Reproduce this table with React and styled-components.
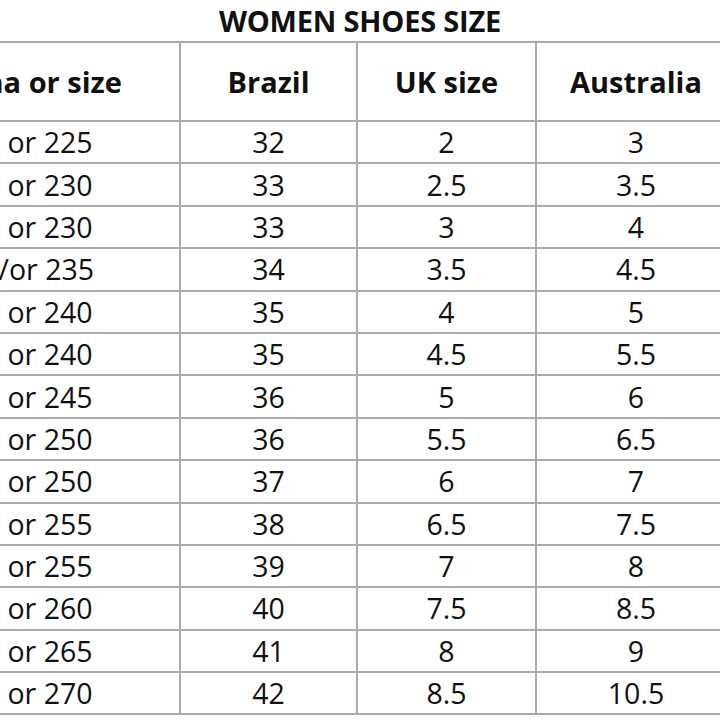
import React from 'react';
import styled, { createGlobalStyle } from 'styled-components';

const GlobalStyle = createGlobalStyle`
  html, body {
    margin: 0;
    padding: 0;
    background: #ffffff;
    overflow: hidden;
  }
  body {
    font-family: "Open Sans", "Liberation Sans", sans-serif;
    color: #111111;
  }
`;

const Page = styled.div`
  width: 720px;
  height: 720px;
  overflow: hidden;
  background: #fff;
`;

const Title = styled.h1`
  margin: 0;
  height: 41px;
  line-height: 42px;
  text-align: center;
  font-size: 29px;
  font-weight: 700;
  letter-spacing: -0.2px;
  color: #111;
`;

const Table = styled.table`
  margin-left: -117px;
  border-collapse: collapse;
  table-layout: fixed;
  width: 852px;
`;

const HeadCell = styled.th`
  height: 77px;
  padding: 0 ${(p) => (p.$lead ? '4px' : '0')} 0 0;
  border: 2px solid #ababab;
  font-size: 29px;
  font-weight: 700;
  text-align: center;
  white-space: nowrap;
  color: #111;
`;

const Cell = styled.td`
  height: 40.4px;
  padding: 0 ${(p) => (p.$lead ? '4px' : '0')} 0 0;
  border: 2px solid #ababab;
  font-size: 28.5px;
  font-weight: 400;
  text-align: center;
  white-space: nowrap;
  color: #111;
`;

const columns = [
  { label: 'China or size', width: 296 },
  { label: 'Brazil', width: 177 },
  { label: 'UK size', width: 179 },
  { label: 'Australia', width: 200 },
];

const rows = [
  ['34 or 225', '32', '2', '3'],
  ['35 or 230', '33', '2.5', '3.5'],
  ['35 or 230', '33', '3', '4'],
  ['36/or 235', '34', '3.5', '4.5'],
  ['36 or 240', '35', '4', '5'],
  ['37 or 240', '35', '4.5', '5.5'],
  ['38 or 245', '36', '5', '6'],
  ['38 or 250', '36', '5.5', '6.5'],
  ['39 or 250', '37', '6', '7'],
  ['39 or 255', '38', '6.5', '7.5'],
  ['40 or 255', '39', '7', '8'],
  ['41 or 260', '40', '7.5', '8.5'],
  ['42 or 265', '41', '8', '9'],
  ['43 or 270', '42', '8.5', '10.5'],
];

export default function App() {
  return (
    <Page>
      <GlobalStyle />
      <Title>WOMEN SHOES SIZE</Title>
      <Table>
        <colgroup>
          {columns.map((c) => (
            <col key={c.label} style={{ width: c.width }} />
          ))}
        </colgroup>
        <thead>
          <tr>
            {columns.map((c, j) => (
              <HeadCell key={c.label} $lead={j === 0}>
                {c.label}
              </HeadCell>
            ))}
          </tr>
        </thead>
        <tbody>
          {rows.map((r, i) => (
            <tr key={i}>
              {r.map((v, j) => (
                <Cell key={j} $lead={j === 0}>
                  {v}
                </Cell>
              ))}
            </tr>
          ))}
        </tbody>
      </Table>
    </Page>
  );
}
